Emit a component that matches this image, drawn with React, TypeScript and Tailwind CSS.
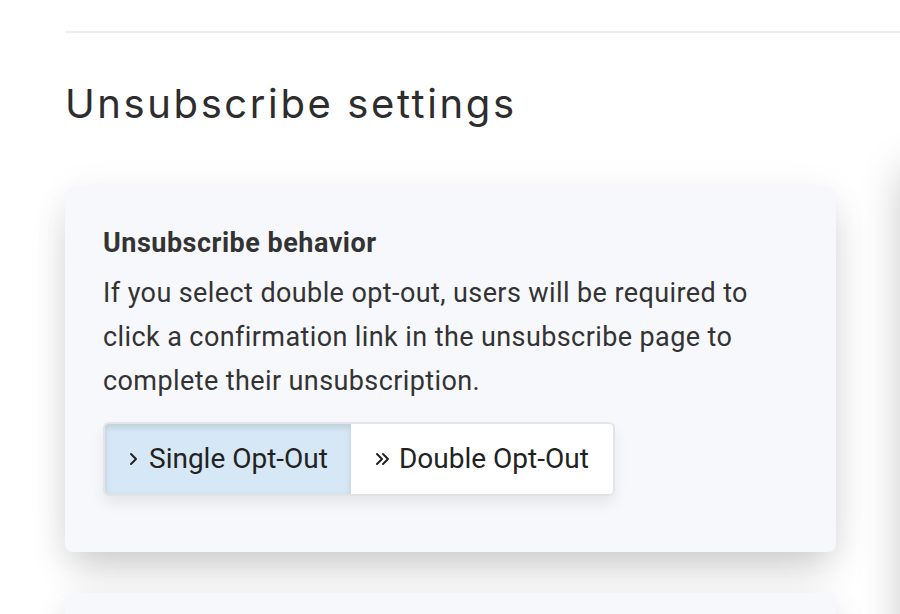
import React from 'react';

function Chevron({ double }: { double?: boolean }) {
  return (
    <svg width={double ? 16 : 10} height="14" viewBox={double ? '0 0 16 14' : '0 0 10 14'} fill="none" stroke="#222" strokeWidth="2" strokeLinecap="round" strokeLinejoin="round">
      {double ? (
        <>
          <polyline points="2,2 7,7 2,12" />
          <polyline points="8,2 13,7 8,12" />
        </>
      ) : (
        <polyline points="2,2 7,7 2,12" />
      )}
    </svg>
  );
}

export default function App() {
  return (
    <div className="relative h-[614px] w-[900px] overflow-hidden bg-white font-['Roboto',sans-serif] text-[#333]">
      {/* right-hand column, off screen: only its shadow shows */}
      <div className="absolute left-[902px] top-[160px] h-[600px] w-[200px] bg-[#f7f8fc] shadow-[0_10px_40px_rgba(0,0,0,0.22)]" />

      <div className="pl-[65px] pt-[31px]">
        <div className="h-[2px] w-[900px] bg-[#ededed]" />

        <h1 className="mt-[43px] font-['Inter',sans-serif] text-[40px] font-normal leading-[56px] tracking-[2.6px] text-[#2d2d2d]">
          Unsubscribe settings
        </h1>

        <div className="mt-[55px] w-[771px] rounded-lg bg-[#f7f8fc] px-[38px] pb-[56px] pt-[41px] shadow-[0_20px_40px_-6px_rgba(0,0,0,0.2),0_0_40px_rgba(0,0,0,0.04)]">
          <h2 className="text-[27px] font-bold leading-[30px] tracking-[0.5px] text-[#333]">Unsubscribe behavior</h2>
          <p className="mt-[13px] w-[690px] text-[27px] leading-[44px] tracking-[0.4px] text-[#333]">
            If you select double opt-out, users will be required to click a confirmation link in the unsubscribe page
            to complete their unsubscription.
          </p>

          <div className="mt-[19px] inline-flex h-[74px] overflow-hidden rounded-md border-2 border-[#e4e4e4] shadow-[0_8px_14px_rgba(0,0,0,0.07)]">
            <button className="flex items-center gap-[10px] bg-[#d6e8f5] pl-[24px] pr-[23px] text-[28px] text-[#222] shadow-[inset_0_3px_6px_rgba(0,0,0,0.12)]">
              <Chevron />
              Single Opt-Out
            </button>
            <button className="flex items-center gap-[8px] bg-white pl-[24px] pr-[24px] text-[28px] text-[#222]">
              <Chevron double />
              Double Opt-Out
            </button>
          </div>
        </div>

        <div className="mt-[41px] h-[100px] w-[771px] rounded-lg bg-[#f7f8fc] shadow-[0_20px_40px_-6px_rgba(0,0,0,0.2),0_0_40px_rgba(0,0,0,0.04)]" />
      </div>
    </div>
  );
}
